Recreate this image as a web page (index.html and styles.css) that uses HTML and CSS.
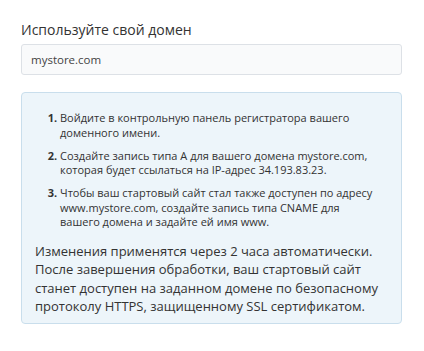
FILE: index.html
```html
<!DOCTYPE html>
<html lang="ru">
<head>
    <meta charset="UTF-8">
    <meta name="viewport" content="width=device-width, initial-scale=1.0">
    <title>Домен</title>
    <link rel="stylesheet" href="styles.css">
</head>
<body>
    <div class="domain-form">
        <h2 class="domain-title">Используйте свой домен</h2>
        <input type="text" class="domain-input" value="mystore.com">

        <div class="domain-help">
            <ol class="help-steps">
                <li>Войдите в контрольную панель регистратора вашего доменного имени.</li>
                <li>Создайте запись типа А для вашего домена mystore.com, которая будет ссылаться на IP-адрес 34.193.83.23.</li>
                <li>Чтобы ваш стартовый сайт стал также доступен по адресу www.mystore.com, создайте запись типа CNAME для вашего домена и задайте ей имя www.</li>
            </ol>
            <p class="help-note">Изменения применятся через 2 часа автоматически. После завершения обработки, ваш стартовый сайт станет доступен на заданном домене по безопасному протоколу HTTPS, защищенному SSL сертификатом.</p>
        </div>
    </div>
</body>
</html>
```

FILE: styles.css
```css
* {
    margin: 0;
    padding: 0;
    box-sizing: border-box;
    font-family: "Open Sans", "Liberation Sans", sans-serif;
}

body {
    background: #fff;
    color: #333;
}

.domain-form {
    width: 381px;
    margin-left: 21px;
    padding-top: 20px;
}

.domain-title {
    font-size: 14px;
    font-weight: 400;
    line-height: 19px;
    margin-bottom: 5px;
    color: #333;
}

.domain-input {
    display: block;
    width: 100%;
    height: 31px;
    padding: 0 9px;
    border: 1px solid #dde1e6;
    border-radius: 3px;
    background: #f9fafb;
    font-size: 11.5px;
    color: #444;
}

.domain-help {
    margin-top: 17px;
    padding: 18px 13px 8px 13px;
    background: #edf5fa;
    border: 1px solid #c9deec;
    border-radius: 4px;
}

.help-steps {
    padding-left: 25px;
    padding-right: 13px;
    font-size: 11px;
    line-height: 14.5px;
    color: #333;
}

.help-steps li {
    margin-bottom: 8.5px;
}

.help-steps li:last-child {
    margin-bottom: 0;
}

.help-steps li::marker {
    font-weight: 700;
}

.help-note {
    margin-top: 12.5px;
    font-size: 13px;
    line-height: 18.3px;
    color: #333;
}
```
